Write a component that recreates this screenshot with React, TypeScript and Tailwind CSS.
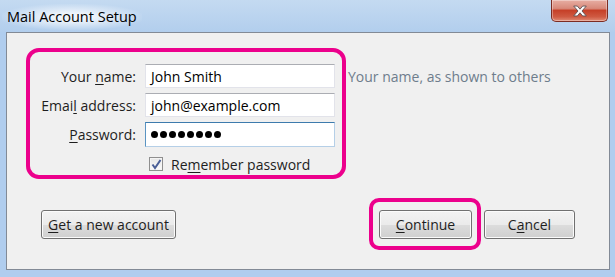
import React from 'react'

const font = { fontFamily: '"Open Sans", "Noto Sans", sans-serif' }

function Field({ value }: { value: string }) {
  return (
    <div className="h-[24px] flex items-center bg-white border border-[#e2e3ea] border-t-[#abadb3] px-[5px] text-[14px] text-black">
      {value}
    </div>
  )
}

function PasswordField() {
  return (
    <div className="h-[25px] flex items-center gap-[2px] bg-white border border-[#b5cfe7] border-t-[#3d7bad] border-l-[#5a94c2] px-[5px]">
      {Array.from({ length: 8 }).map((_, i) => (
        <span key={i} className="w-[7px] h-[7px] rounded-full bg-black" />
      ))}
    </div>
  )
}

function Button({ children, className = '' }: { children: React.ReactNode; className?: string }) {
  return (
    <button
      className={
        'h-[29px] rounded-[3px] border border-[#707070] bg-[linear-gradient(#f2f2f2_0%,#ebebeb_50%,#dddddd_50%,#cfcfcf_100%)] shadow-[inset_0_0_0_1px_#fbfbfb] text-[14px] text-[#1e1e1e] ' +
        className
      }
    >
      {children}
    </button>
  )
}

export default function App() {
  return (
    <div className="w-[615px] h-[277px] flex flex-col bg-[#b0cdee] overflow-hidden" style={font}>
      {/* title bar */}
      <div className="h-[32px] flex items-start justify-between bg-[linear-gradient(#c4daf1,#b2ceed)]">
        <div className="ml-[2px] mt-[4px] px-[5px] h-[26px] flex items-center text-[14.5px] text-black bg-[radial-gradient(ellipse_at_center,rgba(255,255,255,0.75)_20%,transparent_75%)]">
          Mail Account Setup
        </div>
        <div className="mr-[7px] w-[57px] h-[22px] rounded-b-[5px] border border-t-0 border-[#7c2c22] bg-[linear-gradient(#e7aea3_0%,#d8897a_40%,#c64028_50%,#cf5a42_80%,#e08a74_100%)] flex items-center justify-center shadow-[inset_0_0_0_1px_rgba(255,255,255,0.35)]">
          <svg width="18" height="14" viewBox="0 0 20 15">
            <path
              d="M3 2 L7 2 L10 5.5 L13 2 L17 2 L12.2 7.5 L17 13 L13 13 L10 9.5 L7 13 L3 13 L7.8 7.5 Z"
              fill="#ffffff"
              stroke="#5a4f52"
              strokeWidth="1"
              strokeLinejoin="round"
            />
          </svg>
        </div>
      </div>

      {/* content panel */}
      <div className="ml-[6px] mr-[5px] h-[238px] bg-[#f0f0f0] border border-[#828a96] flex flex-col">
        <div className="flex items-start mt-[15px] ml-[19px]">
          <div className="w-[320px] h-[131px] rounded-[13px] border-[4px] border-[#ec008c] pt-[12px]">
            <div className="grid grid-cols-[106px_190px] gap-x-[9px] gap-y-[5px] items-center text-[14px] text-[#1e1e1e]">
              <div className="text-right">
                Your <span className="underline underline-offset-2">n</span>ame:
              </div>
              <Field value="John Smith" />
              <div className="text-right">
                Emai<span className="underline underline-offset-2">l</span> address:
              </div>
              <Field value="john@example.com" />
              <div className="text-right">
                <span className="underline underline-offset-2">P</span>assword:
              </div>
              <PasswordField />
            </div>
            <div className="flex items-center h-[20px] mt-[7px] ml-[119px] gap-[8px] text-[14px] text-[#1e1e1e]">
              <span className="w-[14px] h-[14px] border border-[#8f8f8f] bg-[linear-gradient(#e6e6e6,#fbfbfb)] flex items-center justify-center shadow-[inset_0_0_0_1px_#f4f4f4]">
                <svg width="11" height="11" viewBox="0 0 11 11">
                  <path d="M1.5 5.5 L4 9 L9.5 1" fill="none" stroke="#4a5f97" strokeWidth="2" />
                </svg>
              </span>
              <span>
                Re<span className="underline underline-offset-2">m</span>ember password
              </span>
            </div>
          </div>
          <div className="ml-[2px] mt-[16px] h-[24px] flex items-center text-[14px] text-[#6e7d8c]">
            Your name, as shown to others
          </div>
        </div>

        <div className="flex items-center mt-[31px] px-[34px]">
          <Button className="w-[135px]">
            <span className="underline underline-offset-2">G</span>et a new account
          </Button>
          <div className="flex-1" />
          <div className="relative">
            <div className="absolute -left-[10px] -right-[9px] -top-[12px] -bottom-[11px] rounded-[10px] border-[4px] border-[#ec008c]" />
            <Button className="w-[93px] relative">
              <span className="underline underline-offset-2">C</span>ontinue
            </Button>
          </div>
          <Button className="w-[91px] ml-[12px]">
            C<span className="underline underline-offset-2">a</span>ncel
          </Button>
        </div>
      </div>
    </div>
  )
}
